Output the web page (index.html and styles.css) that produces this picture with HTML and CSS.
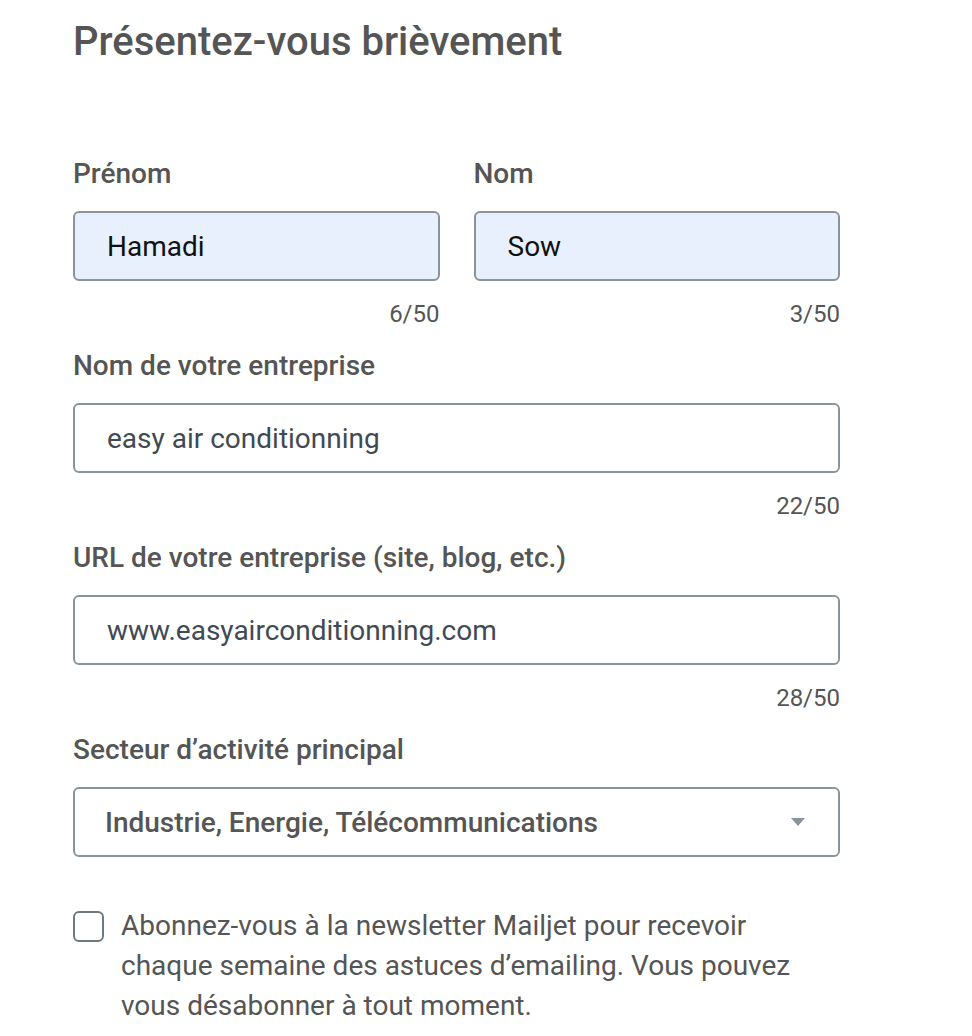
FILE: index.html
```html
<!DOCTYPE html>
<html lang="fr">
<head>
<meta charset="utf-8">
<title>Présentez-vous brièvement</title>
<link rel="stylesheet" href="styles.css">
</head>
<body>
<main class="form">
  <h1 class="title">Présentez-vous brièvement</h1>

  <div class="row">
    <div class="field">
      <label class="label">Prénom</label>
      <div class="input autofill">Hamadi</div>
      <div class="counter">6/50</div>
    </div>
    <div class="field">
      <label class="label">Nom</label>
      <div class="input autofill">Sow</div>
      <div class="counter">3/50</div>
    </div>
  </div>

  <div class="field">
    <label class="label">Nom de votre entreprise</label>
    <div class="input">easy air conditionning</div>
    <div class="counter">22/50</div>
  </div>

  <div class="field">
    <label class="label">URL de votre entreprise (site, blog, etc.)</label>
    <div class="input">www.easyairconditionning.com</div>
    <div class="counter">28/50</div>
  </div>

  <div class="field">
    <label class="label">Secteur d’activité principal</label>
    <div class="select">
      <span class="select-value">Industrie, Energie, Télécommunications</span>
      <svg class="arrow" width="16" height="10" viewBox="0 0 16 10"><path d="M1 1h14L8 9z" fill="#8a939c"/></svg>
    </div>
  </div>

  <div class="check">
    <span class="box"></span>
    <p class="check-text">Abonnez-vous à la newsletter Mailjet pour recevoir chaque semaine des astuces d’emailing. Vous pouvez vous désabonner à tout moment.</p>
  </div>
</main>
</body>
</html>
```

FILE: styles.css
```css
* { box-sizing: border-box; }
html, body { margin: 0; padding: 0; background: #fff; }
body { font-family: Roboto, "Noto Sans", sans-serif; color: #555; }

.form {
  width: 767px;
  padding: 18px 0 0 73px;
  box-sizing: content-box;
  display: flex;
  flex-direction: column;
}

.title {
  margin: 0 0 92px;
  font-size: 40px;
  font-weight: 500;
  line-height: 48px;
  color: #555;
}

.row {
  display: grid;
  grid-template-columns: 1fr 1fr;
  column-gap: 34px;
}

.field { display: flex; flex-direction: column; }

.label {
  font-size: 28px;
  font-weight: 500;
  line-height: 32px;
  color: #555;
  margin-bottom: 21px;
}

.input {
  height: 70px;
  border: 2px solid #8a939c;
  border-radius: 6px;
  padding: 0 32px;
  display: flex;
  align-items: center;
  font-size: 28px;
  color: #3f4a54;
  background: #fff;
}
.input.autofill {
  background: #e8f0fe;
  color: #111;
}

.counter {
  align-self: flex-end;
  font-size: 24px;
  line-height: 28px;
  color: #555;
  margin-top: 19px;
  margin-bottom: 22px;
}

.select {
  height: 70px;
  border: 2px solid #8a939c;
  border-radius: 6px;
  padding: 0 30px;
  display: flex;
  align-items: center;
  justify-content: space-between;
}
.select-value {
  font-size: 28px;
  font-weight: 500;
  color: #555;
}
.arrow { margin-right: 2px; }

.check {
  display: flex;
  align-items: flex-start;
  gap: 17px;
  margin-top: 54px;
}
.box {
  flex: none;
  width: 31px;
  height: 31px;
  border: 2px solid #6e7880;
  border-radius: 6px;
}
.check-text {
  margin: -5px 0 0;
  width: 690px;
  font-size: 28px;
  line-height: 40px;
  color: #555;
}
```
